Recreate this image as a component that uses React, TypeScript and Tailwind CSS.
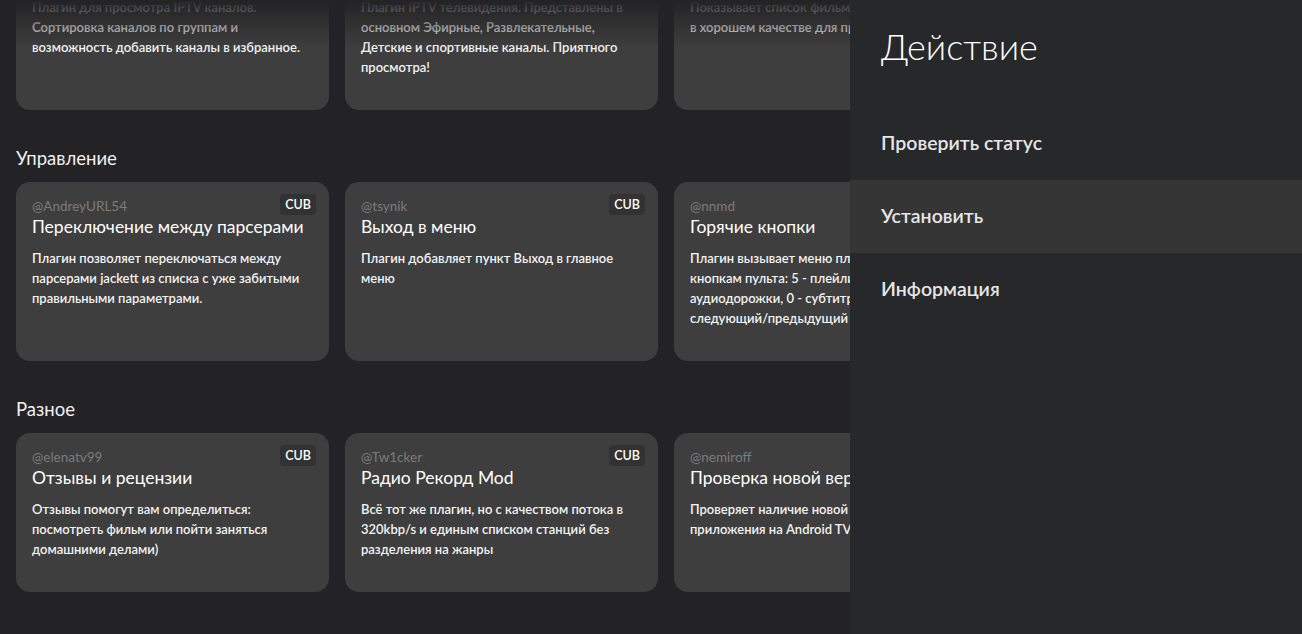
import React from "react";

type Plugin = {
    author: string;
    title: string;
    text: string;
    cub?: boolean;
};

type Section = {
    name: string;
    plugins: Plugin[];
};

const sections: Section[] = [
    {
        name: "Популярные",
        plugins: [
            {
                author: "@lampa",
                title: "IPTV",
                text: "Плагин для просмотра IPTV каналов. Сортировка каналов по группам и возможность добавить каналы в избранное.",
                cub: true,
            },
            {
                author: "@lampa",
                title: "Бесплатное ТВ",
                text: "Плагин IPTV телевидения. Представлены в основном Эфирные, Развлекательные, Детские и спортивные каналы. Приятного просмотра!",
                cub: true,
            },
            {
                author: "@lampa",
                title: "Фильмы 4K",
                text: "Показывает список фильмов, вышедших\nв хорошем качестве для просмотра",
            },
        ],
    },
    {
        name: "Управление",
        plugins: [
            {
                author: "@AndreyURL54",
                title: "Переключение между парсерами",
                text: "Плагин позволяет переключаться между парсерами jackett из списка с уже забитыми правильными параметрами.",
                cub: true,
            },
            {
                author: "@tsynik",
                title: "Выход в меню",
                text: "Плагин добавляет пункт Выход в главное меню",
                cub: true,
            },
            {
                author: "@nnmd",
                title: "Горячие кнопки",
                text: "Плагин вызывает меню плеера по\nкнопкам пульта: 5 - плейлист, 8 -\nаудиодорожки, 0 - субтитры, 2/8 -\nследующий/предыдущий файл",
            },
        ],
    },
    {
        name: "Разное",
        plugins: [
            {
                author: "@elenatv99",
                title: "Отзывы и рецензии",
                text: "Отзывы помогут вам определиться: посмотреть фильм или пойти заняться домашними делами)",
                cub: true,
            },
            {
                author: "@Tw1cker",
                title: "Радио Рекорд Mod",
                text: "Всё тот же плагин, но с качеством потока в 320kbp/s и единым списком станций без разделения на жанры",
                cub: true,
            },
            {
                author: "@nemiroff",
                title: "Проверка новой версии",
                text: "Проверяет наличие новой версии приложения на Android TV",
            },
        ],
    },
];

const actions = ["Проверить статус", "Установить", "Информация"];

function PluginCard({ plugin }: { plugin: Plugin }) {
    return (
        <div className="relative rounded-[14px] bg-[#3e3e3e] px-4 pt-4 pb-[33px]">
            {plugin.cub && (
                <span className="absolute right-[13px] top-3 rounded-[4px] bg-[#323232] px-[5px] text-[12.5px] font-semibold leading-[21px] text-white">
                    CUB
                </span>
            )}
            <div className="text-[13.5px] leading-4 text-[#7b7b7b]">{plugin.author}</div>
            <div className="mt-[2px] text-[17.5px] leading-[22px] text-white">{plugin.title}</div>
            <p className="mt-[10px] whitespace-pre-line text-[13px] font-semibold leading-5 text-[#f2f2f2]">
                {plugin.text}
            </p>
        </div>
    );
}

export default function App() {
    return (
        <div className="relative h-[634px] w-full overflow-hidden bg-[#232325] font-['Lato',sans-serif]">
            <div className="mt-[-105px] flex flex-col gap-9 px-4">
                {sections.map((section) => (
                    <section key={section.name}>
                        <h2 className="mb-3 text-[18.5px] leading-6 text-[#f0f0f0]">{section.name}</h2>
                        <div className="grid grid-cols-[repeat(3,313px)] gap-4">
                            {section.plugins.map((plugin) => (
                                <PluginCard key={plugin.title} plugin={plugin} />
                            ))}
                        </div>
                    </section>
                ))}
            </div>

            {/* fade at the top of the scrolled list */}
            <div className="pointer-events-none absolute inset-x-0 top-0 h-12 bg-linear-to-b from-[#232325] to-[#23232500]" />

            <aside className="absolute right-0 top-0 h-full w-[452px] bg-[#27282a]">
                <div className="flex h-[107px] items-start px-[31px] pt-[22px]">
                    <h1 className="text-[36px] font-light leading-[48px] text-white">Действие</h1>
                </div>
                {actions.map((action) => (
                    <div
                        key={action}
                        className={
                            action === "Установить"
                                ? "flex h-[73px] items-center bg-[#353535] px-[31px] pb-[2px] text-[19.5px] font-semibold text-[#e6e6e6]"
                                : "flex h-[73px] items-center px-[31px] pb-[2px] text-[19.5px] font-semibold text-[#e6e6e6]"
                        }
                    >
                        {action}
                    </div>
                ))}
            </aside>
        </div>
    );
}
